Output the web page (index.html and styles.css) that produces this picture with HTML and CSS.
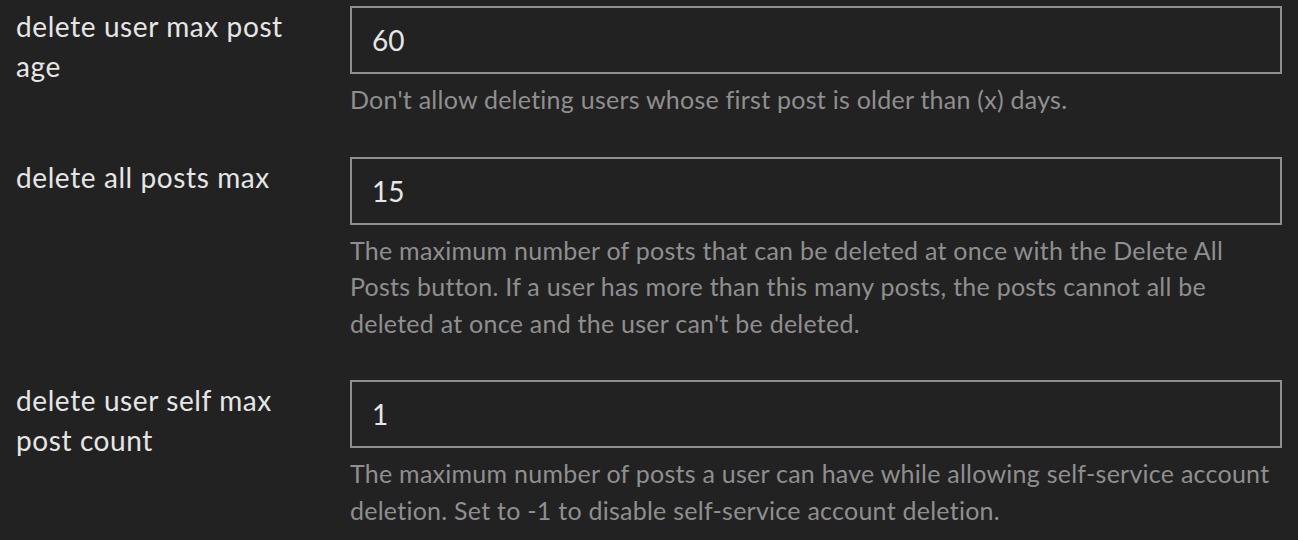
FILE: index.html
```html
<!DOCTYPE html>
<html lang="en">

<head>
    <meta charset="UTF-8">
    <meta name="viewport" content="width=device-width, initial-scale=1.0">
    <title>Site Settings - Users</title>
    <link rel="stylesheet" href="styles.css">
</head>

<body>
    <div class="settings">
        <div class="setting">
            <div class="setting-label">
                <h3>delete user max post age</h3>
            </div>
            <div class="setting-value">
                <input type="text" class="input-setting" value="60" />
                <div class="desc">Don't allow deleting users whose first post is older than (x) days.</div>
            </div>
        </div>

        <div class="setting">
            <div class="setting-label">
                <h3>delete all posts max</h3>
            </div>
            <div class="setting-value">
                <input type="text" class="input-setting" value="15" />
                <div class="desc">The maximum number of posts that can be deleted at once with the Delete All Posts button. If a user has more than this many posts, the posts cannot all be deleted at once and the user can't be deleted.</div>
            </div>
        </div>

        <div class="setting">
            <div class="setting-label">
                <h3>delete user self max post count</h3>
            </div>
            <div class="setting-value">
                <input type="text" class="input-setting" value="1" />
                <div class="desc">The maximum number of posts a user can have while allowing self-service account deletion. Set to -1 to disable self-service account deletion.</div>
            </div>
        </div>
    </div>
</body>

</html>
```

FILE: styles.css
```css
body {
    font-family: Lato, 'Noto Sans', sans-serif;
    background-color: #222222;
    color: #dddddd;
    margin: 0;
    padding: 0;
}

.settings {
    padding: 6px 16px 0 16px;
}

.setting {
    display: flex;
    margin-bottom: 39px;
}

.setting-label {
    width: 310px;
    flex-shrink: 0;
    margin-right: 24px;
}

.setting-label h3 {
    margin: 0;
    font-size: 28px;
    line-height: 40px;
    letter-spacing: 0.6px;
    font-weight: normal;
    color: #e6e6e6;
}

.setting-value {
    width: 932px;
}

.input-setting {
    display: block;
    box-sizing: border-box;
    width: 100%;
    height: 68px;
    margin: 0;
    padding: 0 20px;
    background-color: #222222;
    border: 2px solid #8f8f8f;
    border-radius: 0;
    color: #e6e6e6;
    font-family: Lato, 'Noto Sans', sans-serif;
    font-size: 28px;
    outline: none;
}

.desc {
    margin-top: 7px;
    font-size: 25px;
    line-height: 36.5px;
    letter-spacing: 0.25px;
    color: #8f8f8f;
}
```
